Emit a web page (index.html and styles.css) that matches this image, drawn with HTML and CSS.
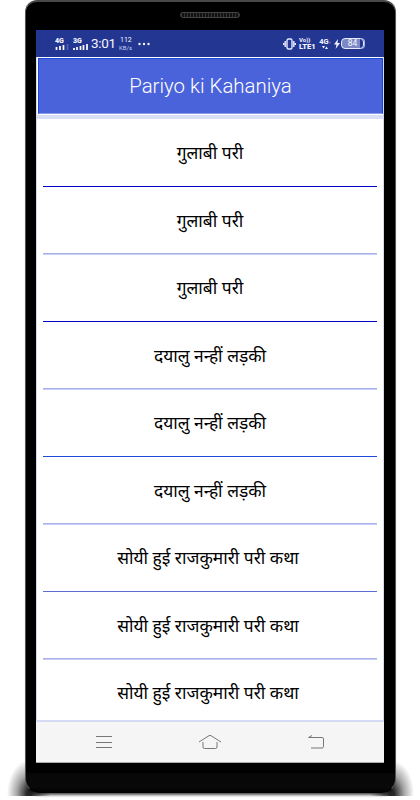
FILE: index.html
```
<!DOCTYPE html>
<html lang="hi">
<head>
    <meta charset="UTF-8">
    <meta name="viewport" content="width=device-width, initial-scale=1.0">
    <link rel="stylesheet" href="styles.css">
    <title>Pariyo ki Kahaniya</title>
</head>
<body>
    <div class="phone">
        <div class="speaker"></div>
        <div class="screen">
            <div class="status-bar">
                <div class="signal">
                    <span>4G</span>
                    <svg width="14" height="6" viewBox="0 0 14 6"><path d="M1.500 3v3M5 2v4M8.500 1v5" /><path class="dim" d="M12.500 0v6" /></svg>
                </div>
                <div class="signal second">
                    <span>3G</span>
                    <svg width="15" height="6" viewBox="0 0 15 6"><path d="M1 4v2M4 3v3M7.500 2v4M10.500 1v5M14 0v6" /></svg>
                </div>
                <span class="clock">3:01</span>
                <div class="speed"><span>112</span><small>KB/s</small></div>
                <svg class="dots" width="12" height="4" viewBox="0 0 12 4"><circle cx="1.500" cy="2" r="1.200" /><circle cx="6" cy="2" r="1.200" /><circle cx="10.500" cy="2" r="1.200" /></svg>
                <svg class="vibrate" width="13" height="12" viewBox="0 0 13 12"><rect x="4" y="1" width="5" height="10" rx="1.500" /><path d="M2.200 3v6M10.800 3v6M.6 5v2M12.400 5v2" /></svg>
                <div class="volte"><span>Vo))</span><b>LTE1</b></div>
                <div class="data">
                    <b>4G<i>↑</i></b>
                    <svg width="6" height="3" viewBox="0 0 6 3"><path d="M0 0h3L1.500 2.500zM3 3h3L4.500.5z" /></svg>
                </div>
                <svg class="bolt" width="6" height="10" viewBox="0 0 6 10"><path d="M4 0 0 5.500h2.500L1.600 10 6 4H3.500z" /></svg>
                <div class="battery"><span>84</span></div>
            </div>
            <div class="app">
                <h1 class="header">Pariyo ki Kahaniya</h1>
                <ul class="stories">
                    <li class="blue">गुलाबी परी</li>
                    <li class="soft">गुलाबी परी</li>
                    <li class="blue">गुलाबी परी</li>
                    <li class="soft">दयालु नन्हीं लड़की</li>
                    <li class="bright">दयालु नन्हीं लड़की</li>
                    <li class="soft">दयालु नन्हीं लड़की</li>
                    <li class="long">सोयी हुई राजकुमारी परी कथा</li>
                    <li class="long soft">सोयी हुई राजकुमारी परी कथा</li>
                    <li class="long">सोयी हुई राजकुमारी परी कथा</li>
                </ul>
            </div>
            <div class="nav-bar">
                <svg width="18" height="14" viewBox="0 0 18 14"><path d="M1 1.500h16M1 7.500h16M1 12.500h16" /></svg>
                <svg width="24" height="16" viewBox="0 0 24 16"><path d="M1 8 11 1.700q1-.6 2 0L23 8M5 8v5q0 1.500 1.500 1.500h11q1.500 0 1.500-1.500V8" /></svg>
                <svg width="18" height="14" viewBox="0 0 18 14"><path d="M5 .5 1.500 2.500H15q1.500 0 1.500 1.500v7.500q0 1.500-1.500 1.500H4" /></svg>
            </div>
        </div>
    </div>
</body>
</html>
```
FILE: styles.css
```
* {
    box-sizing: border-box;
}

body {
    margin: 0;
    height: 800px;
    overflow: hidden;
    background: radial-gradient(ellipse 22px 34px at 29px 794px, rgba(0, 0, 0, 0.85) 10%, rgba(0, 0, 0, 0.35) 55%, transparent 100%) 0 0 / 100% 796px no-repeat,
        radial-gradient(ellipse 22px 34px at 392px 794px, rgba(0, 0, 0, 0.85) 10%, rgba(0, 0, 0, 0.35) 55%, transparent 100%) 0 0 / 100% 796px no-repeat,
        #fff;
    font-family: Roboto, "Noto Sans", "Liberation Sans", sans-serif;
}

.phone {
    width: 371px;
    height: 793px;
    margin-left: 25px;
    padding: 0 10px;
    background: linear-gradient(#000 770px, #080808 772px, #090909 785px, #000 791px);
    border: 1px solid #555;
    border-top: 2px solid #484848;
    border-bottom: 1px solid #000;
    border-radius: 12px 12px 14px 14px;
    box-shadow: 0 4px 3px -2px rgba(0, 0, 0, 0.7);
}

.speaker {
    width: 60px;
    height: 6px;
    margin: 10px 0 12px 144px;
    border: 1px solid #444;
    border-radius: 3px;
    background: repeating-linear-gradient(90deg, #333 0 1px, #111 1px 3px);
}

.screen {
    width: 348px;
    height: 733px;
    background: #fff;
    border-bottom: 1px solid #aaa;
    overflow: hidden;
}

.status-bar {
    display: flex;
    align-items: center;
    height: 27px;
    padding: 0 18px 0 19px;
    background: #233692;
    color: #f4f5ff;
    line-height: 1;
}

.status-bar svg {
    flex: none;
    fill: #f0f2ff;
}

.signal {
    display: flex;
    flex-direction: column;
    width: 14px;
    font-size: 7px;
    font-weight: 900;
    line-height: 6px;
}

.signal svg {
    stroke: #fff;
    stroke-width: 1.7;
}

.signal svg .dim {
    stroke: #5263b5;
}

.second {
    width: 15px;
    margin-left: 4px;
}

.clock {
    width: 25px;
    margin-left: 3px;
    font-size: 13.500px;
    letter-spacing: -0.3px;
}

.speed {
    display: flex;
    flex-direction: column;
    width: 15px;
    margin-left: 3px;
    font-size: 7px;
}

.speed span {
    padding-left: 1px;
}

.speed small {
    margin-top: 1px;
    font-size: 6px;
    color: #c7cff2;
}

.dots {
    margin-left: 4px;
}

.status-bar .vibrate {
    margin-left: auto;
    fill: none;
    stroke: #e8ebff;
    stroke-width: 1.4;
}

.volte {
    display: flex;
    flex-direction: column;
    width: 17px;
    margin-left: 3px;
    font-size: 6px;
    font-weight: 700;
}

.volte b {
    font-size: 7.500px;
}

.data {
    display: flex;
    flex-direction: column;
    align-items: center;
    width: 12px;
    margin-left: 3px;
    font-size: 7.500px;
}

.data b {
    white-space: nowrap;
}

.data i {
    font-size: 4px;
    font-style: normal;
}

.bolt {
    margin-left: 3px;
}

.battery {
    display: flex;
    align-items: center;
    justify-content: center;
    width: 23px;
    height: 11px;
    margin: 0 2px 0 1px;
    border: 1px solid #e8ebff;
    border-radius: 4px;
    background: linear-gradient(90deg, #7d89c4 84%, #233692 84%);
    box-shadow: 1px 0 0 #a8b2e4;
    font-size: 8.500px;
}

.app {
    height: 665px;
    background: #fff;
    border: 0 solid #d5dbf5;
    border-width: 0 1px 2px;
    overflow: hidden;
}

.header {
    display: flex;
    align-items: center;
    justify-content: center;
    height: 56px;
    margin: 1px 0 1px 1px;
    border: 1px solid #1948d8;
    border-bottom-color: #8a9ae8;
    background: #4a63da;
    color: #fff;
    font-size: 20.400px;
    font-weight: 300;
}

.stories {
    margin: 0;
    padding: 0 6px;
    border-top: 4.500px solid #d8def5;
    list-style: none;
    color: #000;
    font-family: "Noto Sans", "Noto Sans Devanagari", sans-serif;
    font-size: 17.400px;
}

.stories li {
    display: flex;
    align-items: center;
    justify-content: center;
    height: 67.500px;
    border-bottom: 1px solid #5c6cd0;
}

.stories .long {
    padding-right: 4px;
}

.stories .blue {
    border-color: #0000c8;
}

.stories .bright {
    border-color: #1f4cd8;
}

.stories .soft {
    border-color: #a9b1ea;
    box-shadow: 0 1px 0 #c8cef3;
}

.nav-bar {
    display: flex;
    align-items: center;
    justify-content: space-between;
    height: 40px;
    padding: 0 59px;
    background: #f5f5f5;
}

.nav-bar svg {
    fill: none;
    stroke: #777;
    stroke-width: 1;
}
```
